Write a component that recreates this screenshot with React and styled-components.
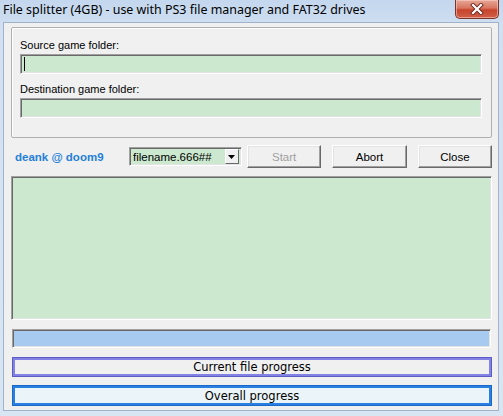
import styled, { createGlobalStyle } from "styled-components";

const GlobalStyle = createGlobalStyle`
  html, body {
    margin: 0;
    padding: 0;
  }
  body {
    width: 503px;
    height: 416px;
    overflow: hidden;
    font-family: "Liberation Sans", Arial, sans-serif;
  }
`;

const Window = styled.div`
  width: 503px;
  height: 416px;
  box-sizing: border-box;
  display: flex;
  flex-direction: column;
  padding: 0 4px 5px 3px;
  background: linear-gradient(to bottom, #c3d7ee 0, #d2e0f1 30px, #d8e5f3 100%);
`;

const TitleBar = styled.div`
  height: 22px;
  display: flex;
  align-items: flex-start;
  justify-content: space-between;
`;

const Title = styled.div`
  font-family: "Noto Sans", "Noto Sans CJK SC", sans-serif;
  font-size: 12.45px;
  line-height: 20px;
  color: #000;
`;

const CloseBtn = styled.div`
  width: 44px;
  height: 19px;
  box-sizing: border-box;
  border: 1px solid #7a3328;
  border-top: none;
  border-radius: 0 0 5px 5px;
  background: linear-gradient(to bottom, #e6a797 0, #d8755f 45%, #c7432b 55%, #d0604a 100%);
  box-shadow: inset 0 0 0 1px rgba(255, 210, 200, 0.55);
  display: flex;
  align-items: center;
  justify-content: center;
`;

const Client = styled.div`
  flex: 1;
  display: flex;
  flex-direction: column;
  background: #f0f0f0;
  border: 1px solid #9fb3cc;
  padding: 4px 6px 4px 7px;
`;

const GroupBox = styled.div`
  border: 1px solid #b0b0b0;
  box-shadow: inset 1px 1px 0 #fff;
  border-radius: 2px;
  padding: 10px 9px 19px 8px;
  display: flex;
  flex-direction: column;
`;

const FieldLabel = styled.div`
  font-size: 11px;
  line-height: 14px;
  height: 14px;
  color: #000;
  margin-bottom: 2px;
  margin-top: ${(p) => (p.$first ? "0" : "8px")};
`;

const sunken = `
  box-sizing: border-box;
  border-top: 1px solid #a0a0a0;
  border-left: 1px solid #a0a0a0;
  border-bottom: 1px solid #fff;
  border-right: 1px solid #fff;
  box-shadow: inset 1px 1px 0 #696969, inset -1px -1px 0 #e3e3e3;
`;

const TextField = styled.div`
  ${sunken}
  height: 20px;
  background: #cce8cf;
  display: flex;
  align-items: center;
  padding-left: 3px;
`;

const Caret = styled.span`
  width: 1px;
  height: 14px;
  background: #000;
`;

const ActionRow = styled.div`
  margin-top: 7px;
  height: 23px;
  display: flex;
  align-items: center;
`;

const Credit = styled.div`
  width: 115px;
  padding-left: 4px;
  font-size: 11.5px;
  font-weight: bold;
  color: #2580d8;
`;

const Combo = styled.div`
  ${sunken}
  width: 114px;
  height: 19px;
  background: #cce8cf;
  display: flex;
  align-items: center;
  justify-content: space-between;
  padding: 0 2px 0 3px;
  font-size: 11.5px;
  color: #000;
`;

const DropBtn = styled.div`
  width: 14px;
  height: 15px;
  box-sizing: border-box;
  background: #f0f0f0;
  border-top: 1px solid #fff;
  border-left: 1px solid #fff;
  border-right: 1px solid #696969;
  border-bottom: 1px solid #696969;
  display: flex;
  align-items: center;
  justify-content: center;
`;

const Button = styled.div`
  width: 75px;
  height: 23px;
  box-sizing: border-box;
  margin-left: ${(p) => p.$gap}px;
  background: #f0f0f0;
  border-top: 1px solid #fff;
  border-left: 1px solid #fff;
  border-right: 1px solid #696969;
  border-bottom: 1px solid #696969;
  box-shadow: inset -1px -1px 0 #a0a0a0, inset 1px 1px 0 #e3e3e3;
  display: flex;
  align-items: center;
  justify-content: center;
  font-size: 11.5px;
  color: ${(p) => (p.$disabled ? "#a0a0a0" : "#000")};
`;

const LogArea = styled.div`
  ${sunken}
  margin-top: 8px;
  height: 144px;
  background: #cce8cf;
`;

const Bar = styled.div`
  ${sunken}
  margin: 9px 1px 0 1px;
  height: 19px;
  background: #a6caf0;
`;

const Progress = styled.div`
  margin: ${(p) => p.$top}px 0 0 1px;
  height: ${(p) => p.$h}px;
  box-sizing: border-box;
  border: 1px solid ${(p) => p.$dark};
  box-shadow: inset 0 0 0 2px ${(p) => p.$color};
  background: ${(p) => p.$bg};
  display: flex;
  align-items: center;
  justify-content: center;
  font-family: "DejaVu Sans", Verdana, sans-serif;
  font-size: 11.5px;
  color: #000;
`;

export default function App() {
  return (
    <>
      <GlobalStyle />
      <Window>
        <TitleBar>
          <Title>File splitter (4GB) - use with PS3 file manager and FAT32 drives</Title>
          <CloseBtn>
            <svg width="14" height="12" viewBox="0 0 14 12">
              <path d="M3 2 L11 10 M11 2 L3 10" stroke="#6b2a20" strokeWidth="4" strokeLinecap="square" />
              <path d="M3 2 L11 10 M11 2 L3 10" stroke="#fff" strokeWidth="2.2" strokeLinecap="square" />
            </svg>
          </CloseBtn>
        </TitleBar>
        <Client>
          <GroupBox>
            <FieldLabel $first>Source game folder:</FieldLabel>
            <TextField>
              <Caret />
            </TextField>
            <FieldLabel>Destination game folder:</FieldLabel>
            <TextField />
          </GroupBox>
          <ActionRow>
            <Credit>deank @ doom9</Credit>
            <Combo>
              <span>filename.666##</span>
              <DropBtn>
                <svg width="7" height="4" viewBox="0 0 7 4">
                  <path d="M0 0 H7 L3.5 4 Z" fill="#000" />
                </svg>
              </DropBtn>
            </Combo>
            <Button $gap={5} $disabled>Start</Button>
            <Button $gap={11}>Abort</Button>
            <Button $gap={11}>Close</Button>
          </ActionRow>
          <LogArea />
          <Bar />
          <Progress $top={9} $h={20} $dark="#5c5cc4" $color="#8282e4" $bg="#f0f0f0">
            Current file progress
          </Progress>
          <Progress $top={8} $h={21} $dark="#1a68c8" $color="#2a80e0" $bg="#ebf5f9">
            Overall progress
          </Progress>
        </Client>
      </Window>
    </>
  );
}
